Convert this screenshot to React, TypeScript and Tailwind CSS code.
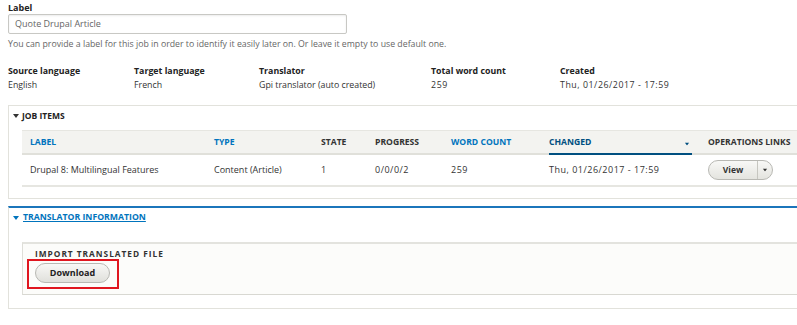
import React from "react";

const F = { fontFamily: '"Open Sans", "DejaVu Sans", sans-serif' };

function Caret({ className = "" }: { className?: string }) {
  return (
    <svg width="6" height="4" viewBox="0 0 6 4" className={className}>
      <path d="M0 0 L6 0 L3 4 Z" fill="currentColor" />
    </svg>
  );
}

function Info({ h, w, children }: { h: string; w: string; children: React.ReactNode }) {
  return (
    <div className={w}>
      <div className="font-bold text-[#222]">{h}</div>
      {children}
    </div>
  );
}

export default function App() {
  return (
    <div style={F} className="relative w-[797px] h-[325px] overflow-hidden bg-white text-[#333]">
      <div className="pl-[8px] pt-[2px]">
        <div className="text-[9px] leading-[11px] font-bold text-[#222]">Label</div>
        <div className="mt-[1px] w-[339px] h-[20px] border border-[#c8c8c4] rounded-[2px] flex items-center px-[6px] text-[9px] text-[#666] shadow-[inset_0_1px_2px_rgba(0,0,0,0.08)]">
          Quote Drupal Article
        </div>
        <div className="mt-[4px] text-[8.75px] leading-[12px] text-[#666]">
          You can provide a label for this job in order to identify it easily later on. Or leave it empty to use default one.
        </div>
        <div className="mt-[14px] flex text-[8.8px] leading-[14px]">
          <Info h="Source language" w="w-[126px]">
            <div className="text-[#333]">English</div>
          </Info>
          <Info h="Target language" w="w-[125px]">
            <div className="text-[#333]">French</div>
          </Info>
          <Info h="Translator" w="w-[172px]">
            <div className="text-[#333]">Gpi translator (auto created)</div>
          </Info>
          <Info h="Total word count" w="w-[129px]">
            <div className="text-[#333] tracking-[0.6px]">259</div>
          </Info>
          <Info h="Created" w="w-[160px]">
            <div className="text-[#333] tracking-[0.55px]">Thu, 01/26/2017 - 17:59</div>
          </Info>
        </div>
      </div>

      {/* Job items */}
      <div className="ml-[8px] mt-[13px] w-[800px] h-[94px] border border-[#e2e2dc] border-r-0">
        <div className="h-[20px] flex items-center pl-[4px] text-[8.5px] font-bold text-[#222]">
          <Caret className="text-[#333] mr-[3px]" />
          JOB ITEMS
        </div>
        <div className="ml-[13px] mt-[4px]">
          <div className="h-[25px] flex items-center bg-[#f3f3f0] border-t border-[#e6e6e1] border-b-2 border-b-[#e0e0da] text-[8.6px] font-bold">
            <div className="w-[184px] pl-[8px] text-[#0074bd]">LABEL</div>
            <div className="w-[107px] pl-[8px] text-[#0074bd]">TYPE</div>
            <div className="w-[54px] pl-[8px] text-[#333]">STATE</div>
            <div className="w-[76px] pl-[8px] text-[#333]">PROGRESS</div>
            <div className="w-[98px] pl-[8px] text-[#0074bd]">WORD COUNT</div>
            <div className="w-[159px] px-[8px] self-stretch flex">
              <div className="flex-1 flex items-center justify-between border-b-[2px] border-[#004f80] text-[#004f80] -mb-[2px]">
                <span>CHANGED</span>
                <Caret className="text-[#004f80] mr-[2px] mt-[3px] scale-75" />
              </div>
            </div>
            <div className="pl-[8px] text-[#333]">OPERATIONS LINKS</div>
          </div>
          <div className="h-[32px] flex items-center border-b-2 border-[#e6e6e1] text-[9px] text-[#333]">
            <div className="w-[184px] pl-[8px]">Drupal 8: Multilingual Features</div>
            <div className="w-[107px] pl-[8px]">Content (Article)</div>
            <div className="w-[54px] pl-[8px]">1</div>
            <div className="w-[76px] pl-[8px] tracking-[0.5px]">0/0/0/2</div>
            <div className="w-[98px] pl-[8px] tracking-[0.5px]">259</div>
            <div className="w-[159px] pl-[8px] tracking-[0.5px]">Thu, 01/26/2017 - 17:59</div>
            <div className="pl-[8px]">
              <div className="flex h-[20px] w-[65px] rounded-full border border-[#b8b8b3] bg-gradient-to-b from-[#f8f8f6] to-[#e4e4df] text-[8.5px] font-bold text-[#333]">
                <div className="w-[49px] flex items-center justify-center border-r border-[#c6c6c0]">View</div>
                <div className="flex-1 flex items-center justify-center">
                  <Caret className="scale-75" />
                </div>
              </div>
            </div>
          </div>
        </div>
      </div>

      {/* Translator information */}
      <div className="ml-[8px] mt-[7px] w-[800px] h-[103px] border border-[#e2e2dc] border-t-[2px] border-t-[#1b75bb] border-r-0">
        <div className="h-[20px] flex items-center pl-[4px] text-[8.7px] font-bold text-[#0074bd]">
          <Caret className="mr-[4px]" />
          <span className="underline">TRANSLATOR INFORMATION</span>
        </div>
        <div className="ml-[13px] mt-[14px] h-[53px] bg-[#fcfcfa] border-t-2 border-t-[#e3e3de] border-l border-l-[#deded8] border-b border-b-[#d8d8d2]">
          <div className="pl-[12px] pt-[4px] text-[8.3px] leading-[11px] font-bold tracking-[1px] text-[#333]">
            IMPORT TRANSLATED FILE
          </div>
          <div className="pl-[12px] mt-[4px]">
            <div className="relative w-[75px]">
              <div className="h-[20px] w-[75px] rounded-full border border-[#b8b8b3] bg-gradient-to-b from-[#f8f8f6] to-[#e0e0db] flex items-center justify-center text-[9px] font-bold text-[#222]">
                Download
              </div>
              <div className="absolute left-[-8px] top-[-4px] w-[92px] h-[30px] border-2 border-[#e0161f]" />
            </div>
          </div>
        </div>
      </div>
    </div>
  );
}
